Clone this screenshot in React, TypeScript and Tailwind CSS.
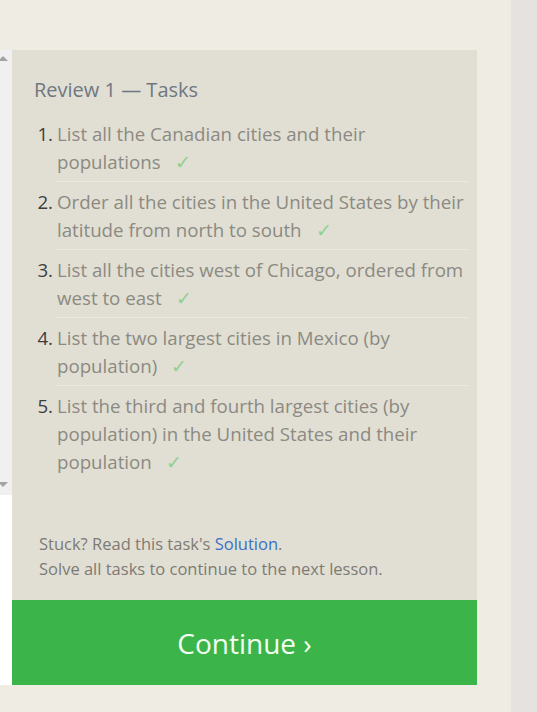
import React from "react";

const tasks = [
  "List all the Canadian cities and their populations",
  "Order all the cities in the United States by their latitude from north to south",
  "List all the cities west of Chicago, ordered from west to east",
  "List the two largest cities in Mexico (by population)",
  "List the third and fourth largest cities (by population) in the United States and their population",
];

export default function App() {
  return (
    <div
      className="w-[537px] h-[712px] flex overflow-hidden"
      style={{ fontFamily: '"Open Sans", "Noto Sans", sans-serif' }}
    >
      <div className="w-[511px] h-full bg-[#efece4] pt-[50px]">
        <div className="flex">
          {/* left scroll strip */}
          <div className="w-[12px] flex flex-col">
            <div className="h-[445px] bg-[#f0f0f0] relative">
              <div className="absolute left-[-2px] top-[6px] w-0 h-0 border-l-[5px] border-r-[5px] border-b-[5px] border-l-transparent border-r-transparent border-b-[#a3a3a3]" />
              <div className="absolute left-[-2px] bottom-[8px] w-0 h-0 border-l-[5px] border-r-[5px] border-t-[5px] border-l-transparent border-r-transparent border-t-[#a3a3a3]" />
            </div>
            <div className="h-[190px] bg-white" />
          </div>
          {/* main panel */}
          <div className="w-[465px] flex flex-col">
            <div className="bg-[#e1dfd4] pt-[27px] pb-[19px]">
              <h2 className="pl-[22px] text-[20px] leading-[26px] text-[#6f7780]">
                Review 1 — Tasks
              </h2>
              <ol className="mt-[17px] pr-[9px]">
                {tasks.map((t, i) => (
                  <li key={i} className="flex pl-[22px]">
                    <span
                      className={
                        "w-[23px] pr-[4px] text-right text-[18.7px] leading-[28px] text-[#3d3d3d] shrink-0 " +
                        (i === 0 ? "pt-0" : "pt-[6px]")
                      }
                    >
                      {i + 1}.
                    </span>
                    <div
                      className={
                        "flex-1 text-[18.7px] leading-[28px] text-[#8c8a82] " +
                        (i === 0 ? "pt-0 " : "pt-[6px] ") +
                        (i < tasks.length - 1 ? "pb-[5px] border-b border-[#ebe9e0]" : "")
                      }
                    >
                      {t}
                      <span className="ml-[14px] text-[#8fd18f]">✓</span>
                    </div>
                  </li>
                ))}
              </ol>
              <div className="mt-[55px] pl-[27px] text-[16.5px] leading-[25px] text-[#7d7b74]">
                <p>
                  Stuck? Read this task's{" "}
                  <a className="text-[#3b6fc9]">Solution</a>.
                </p>
                <p>Solve all tasks to continue to the next lesson.</p>
              </div>
            </div>
            <button className="h-[85px] bg-[#3bb54a] text-[#f3fff3] text-[28px] flex items-center justify-center">
              Continue ›
            </button>
          </div>
        </div>
      </div>
      <div className="flex-1 h-full bg-[#e6e2df]" />
    </div>
  );
}
